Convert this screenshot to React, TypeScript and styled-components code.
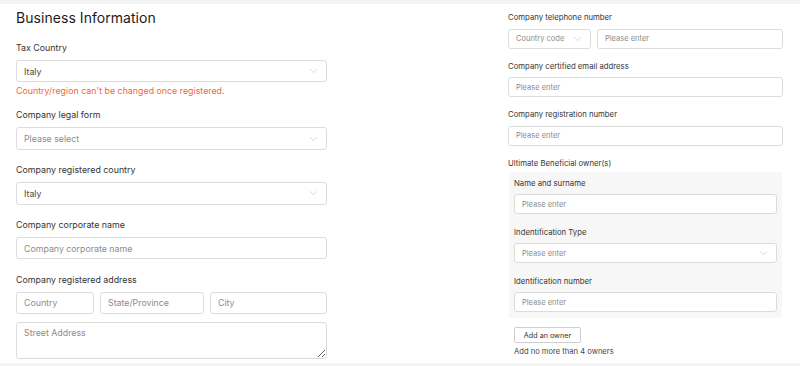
import styled, { createGlobalStyle } from "styled-components";

const GlobalStyle = createGlobalStyle`
  html, body {
    margin: 0;
    padding: 0;
    background: #ffffff;
  }
  body {
    font-family: Inter, "Liberation Sans", Arial, sans-serif;
    color: #333333;
  }
  * {
    box-sizing: border-box;
  }
`;

type Size = "lg" | "sm";

const Page = styled.div`
  width: 800px;
  height: 366px;
  overflow: hidden;
  display: flex;
  flex-direction: column;
  background: #ffffff;
`;

const Band = styled.div<{ $h: number }>`
  height: ${(p) => p.$h}px;
  flex-shrink: 0;
  background: #f3f3f3;
`;

const Main = styled.main`
  flex: 1;
  min-height: 0;
  overflow: hidden;
  display: grid;
  grid-template-columns: 311px 275px;
  column-gap: 181px;
  padding-left: 16px;
`;

const Column = styled.section<{ $size: Size }>`
  display: flex;
  flex-direction: column;
  gap: ${(p) => (p.$size === "lg" ? "14.3px" : "12px")};
  padding-top: ${(p) => (p.$size === "lg" ? "0" : "8px")};
`;

const Title = styled.h2`
  margin: 4px 0 -0.5px;
  font-size: 14px;
  line-height: 20px;
  font-weight: 400;
  color: #1b1b1b;
  letter-spacing: 0.05px;
`;

const Field = styled.div`
  display: flex;
  flex-direction: column;
`;

const Label = styled.label<{ $size: Size }>`
  font-size: ${(p) => (p.$size === "lg" ? "8.85px" : "7.75px")};
  line-height: ${(p) => (p.$size === "lg" ? "12px" : "11px")};
  margin-bottom: ${(p) => (p.$size === "lg" ? "6px" : "5.5px")};
  color: #333333;
`;

const ErrorText = styled.div`
  margin: 4px 0 -1.3px;
  font-size: 8.85px;
  line-height: 10px;
  color: #f0673a;
`;

const Control = styled.div<{ $size: Size }>`
  position: relative;
  display: flex;
  align-items: center;
  width: 100%;
  height: ${(p) => (p.$size === "lg" ? "22.5px" : "20px")};
  padding: 0 7px;
  background: #ffffff;
  border: 1px solid #dcdcdc;
  border-radius: 3px;
  font-size: ${(p) => (p.$size === "lg" ? "8.8px" : "7.5px")};
`;

const Value = styled.span<{ $placeholder?: boolean }>`
  flex: 1;
  color: ${(p) => (p.$placeholder ? "#8c8c8c" : "#4a4a4a")};
  white-space: nowrap;
`;

const Chevron = styled.svg`
  width: 7px;
  height: 4px;
  margin-right: 2px;
  flex-shrink: 0;
`;

const TextInput = styled.input<{ $size: Size }>`
  width: 100%;
  height: ${(p) => (p.$size === "lg" ? "22.5px" : "20px")};
  padding: 0 7px;
  border: 1px solid #dcdcdc;
  border-radius: 3px;
  background: #ffffff;
  font-family: inherit;
  font-size: ${(p) => (p.$size === "lg" ? "8.8px" : "7.5px")};
  color: #4a4a4a;
  outline: none;

  &::placeholder {
    color: #8c8c8c;
  }
`;

const TextArea = styled.textarea`
  width: 100%;
  height: 37.5px;
  margin-top: 7.5px;
  padding: 4px 7px;
  border: 1px solid #dcdcdc;
  border-radius: 3px;
  font-family: inherit;
  font-size: 8.8px;
  line-height: 12px;
  color: #4a4a4a;
  outline: none;
  display: block;

  &::placeholder {
    color: #8c8c8c;
  }
`;

const AddressRow = styled.div`
  display: grid;
  grid-template-columns: 78px 104px 1fr;
  gap: 6px;
`;

const PhoneRow = styled.div`
  display: grid;
  grid-template-columns: 83px 1fr;
  gap: 6px;
`;

const OwnerPanel = styled.div`
  margin: -2.5px 1px 0;
  padding: 6px 5.3px 6px 5px;
  background: #f7f7f7;
  display: flex;
  flex-direction: column;
  gap: 12.5px;
`;

const OwnerFooter = styled.div`
  margin-top: 9px;
  padding-left: 6px;
  display: flex;
  flex-direction: column;
  align-items: flex-start;
`;

const AddButton = styled.button`
  height: 16px;
  width: 67px;
  padding: 0;
  border: 1px solid #cfcfcf;
  border-radius: 2px;
  background: #ffffff;
  font-family: inherit;
  font-size: 7.2px;
  color: #333333;
  cursor: pointer;
`;

const Note = styled.div`
  margin-top: 3px;
  font-size: 7.6px;
  line-height: 11px;
  color: #444444;
`;

const Select = ({
  size,
  value,
  placeholder,
}: {
  size: Size;
  value?: string;
  placeholder?: string;
}) => (
  <Control $size={size}>
    <Value $placeholder={!value}>{value ?? placeholder}</Value>
    <Chevron viewBox="0 0 7 4">
      <polyline
        points="0.3,0.3 3.5,3.6 6.7,0.3"
        fill="none"
        stroke="#c9c9c9"
        strokeWidth="0.7"
      />
    </Chevron>
  </Control>
);

const App = () => {
  return (
    <>
      <GlobalStyle />
      <Page>
        <Band $h={4} />
        <Main>
          <Column $size="lg">
            <Title>Business Information</Title>
            <Field>
              <Label $size="lg">Tax Country</Label>
              <Select size="lg" value="Italy" />
              <ErrorText>Country/region can't be changed once registered.</ErrorText>
            </Field>
            <Field>
              <Label $size="lg">Company legal form</Label>
              <Select size="lg" placeholder="Please select" />
            </Field>
            <Field>
              <Label $size="lg">Company registered country</Label>
              <Select size="lg" value="Italy" />
            </Field>
            <Field>
              <Label $size="lg">Company corporate name</Label>
              <TextInput $size="lg" placeholder="Company corporate name" />
            </Field>
            <Field>
              <Label $size="lg">Company registered address</Label>
              <AddressRow>
                <TextInput $size="lg" placeholder="Country" />
                <TextInput $size="lg" placeholder="State/Province" />
                <TextInput $size="lg" placeholder="City" />
              </AddressRow>
              <TextArea placeholder="Street Address" />
            </Field>
          </Column>

          <Column $size="sm">
            <Field>
              <Label $size="sm">Company telephone number</Label>
              <PhoneRow>
                <Select size="sm" placeholder="Country code" />
                <TextInput $size="sm" placeholder="Please enter" />
              </PhoneRow>
            </Field>
            <Field>
              <Label $size="sm">Company certified email address</Label>
              <TextInput $size="sm" placeholder="Please enter" />
            </Field>
            <Field>
              <Label $size="sm">Company registration number</Label>
              <TextInput $size="sm" placeholder="Please enter" />
            </Field>
            <Field>
              <Label $size="sm">Ultimate Beneficial owner(s)</Label>
              <OwnerPanel>
                <Field>
                  <Label $size="sm">Name and surname</Label>
                  <TextInput $size="sm" placeholder="Please enter" />
                </Field>
                <Field>
                  <Label $size="sm">Indentification Type</Label>
                  <Select size="sm" placeholder="Please enter" />
                </Field>
                <Field>
                  <Label $size="sm">Identification number</Label>
                  <TextInput $size="sm" placeholder="Please enter" />
                </Field>
              </OwnerPanel>
              <OwnerFooter>
                <AddButton>Add an owner</AddButton>
                <Note>Add no more than 4 owners</Note>
              </OwnerFooter>
            </Field>
          </Column>
        </Main>
        <Band $h={3} />
      </Page>
    </>
  );
};

export default App;
